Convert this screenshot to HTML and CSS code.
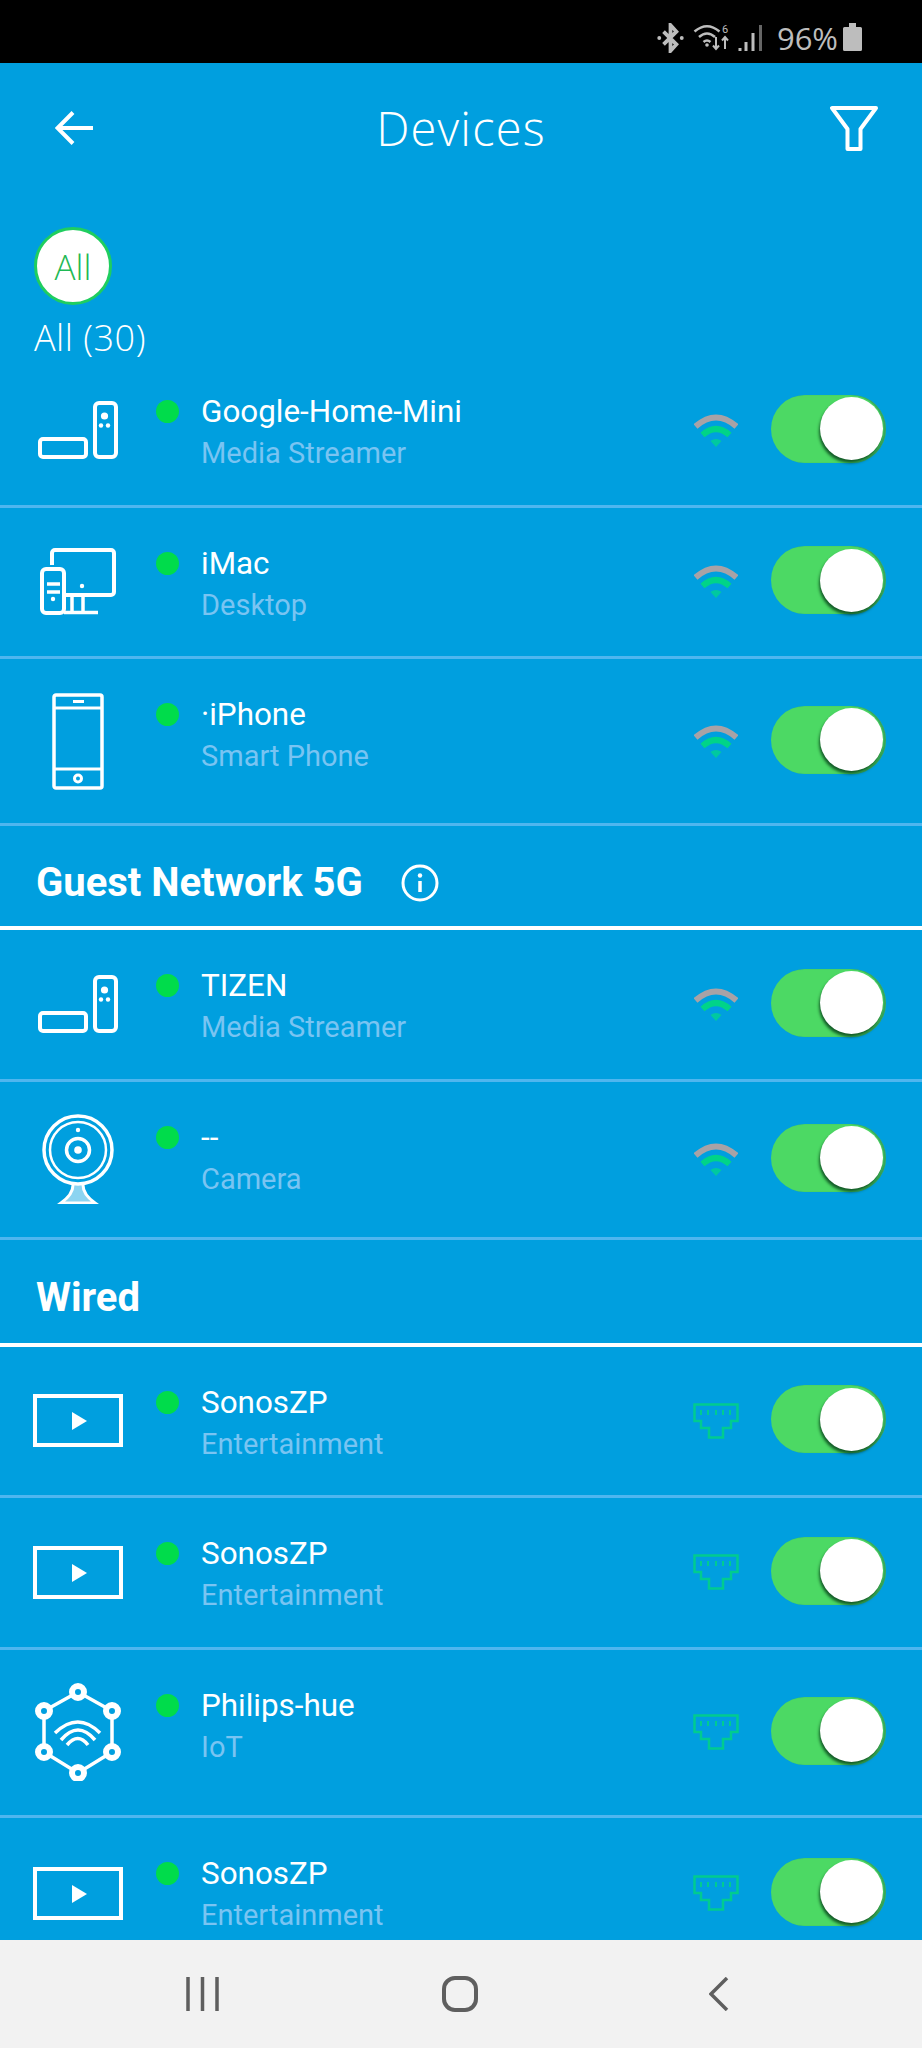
FILE: index.html
```html
<!DOCTYPE html>
<html lang="en">
<head>
    <meta charset="UTF-8">
    <meta name="viewport" content="width=device-width, initial-scale=1.0">
    <title>Devices</title>
    <link rel="stylesheet" href="styles.css">
</head>
<body>

<svg class="sprites" width="0" height="0">
    <symbol id="media" viewBox="0 0 80 58">
        <rect x="2" y="38" width="46" height="18" rx="3" fill="none" stroke="#fff" stroke-width="4"/>
        <rect x="57" y="2" width="21" height="54" rx="4" fill="none" stroke="#fff" stroke-width="4"/>
        <circle cx="66.5" cy="15" r="3.6" fill="#fff"/>
        <circle cx="63" cy="24.5" r="2.2" fill="#fff"/>
        <circle cx="70" cy="24.5" r="2.2" fill="#fff"/>
    </symbol>
    <symbol id="wifi" viewBox="0 0 44 33">
        <path d="M1.500 12.500Q22 -5.500 42.500 12.500" fill="none" stroke="#a8a2a6" stroke-width="6"/>
        <path d="M8.500 21Q22 9 35.500 21" fill="none" stroke="#00d488" stroke-width="6"/>
        <path d="M16.500 27Q22 23 27.500 27L22 33Z" fill="#00c9a0"/>
    </symbol>
    <symbol id="screen" viewBox="0 0 90 53">
        <rect x="2" y="2" width="86" height="49" fill="none" stroke="#fff" stroke-width="4"/>
        <path d="M39 18L54 27L39 36Z" fill="#fff"/>
    </symbol>
    <symbol id="ethernet" viewBox="0 0 46 36">
        <path d="M1.500 1.500H44.500V18H38V25H30V34.500H16V25H8V18H1.500Z" fill="none" stroke="#00cc90" stroke-width="2.500"/>
        <path d="M8 7V12M15 7V12M23 7V12M30 7V12M37 7V12" stroke="#00cc90" stroke-width="2"/>
    </symbol>
</svg>

<div class="phone">
    <div class="status-bar">
        <svg class="st-bt" viewBox="0 0 25 28"><path d="M6 8L18 20L12.500 26V2L18 8L6 20" fill="none" stroke="#bdbdbd" stroke-width="3.500"/><circle cx="2" cy="14" r="1.800" fill="#bdbdbd"/><circle cx="23" cy="14" r="1.800" fill="#bdbdbd"/></svg>
        <svg class="st-wifi" viewBox="0 0 37 27">
            <path d="M1.500 7.500Q14 -3 26.500 7.500M6 13Q14 6 22 13M10.500 18Q14 15 17.500 18" fill="none" stroke="#bdbdbd" stroke-width="2.500"/>
            <circle cx="14" cy="21" r="1.800" fill="#bdbdbd"/>
            <text x="29" y="9" class="st-six">6</text>
            <path d="M23 13V25M20 21.500L23 25L26 21.500M32 25V13M29 16.500L32 13L35 16.500" fill="none" stroke="#bdbdbd" stroke-width="2"/>
        </svg>
        <svg class="st-signal" viewBox="0 0 24 26"><path d="M2 23V26M8 17V26M15 8V26" stroke="#bdbdbd" stroke-width="3"/><path d="M22.500 0V26" stroke="#666" stroke-width="3"/></svg>
        <span class="st-pct">96%</span>
        <svg class="st-batt" viewBox="0 0 19 28"><path d="M6 0H13V4H17.500A1.500 1.500 0 0 1 19 5.500V26.500A1.500 1.500 0 0 1 17.500 28H1.500A1.500 1.500 0 0 1 0 26.500V5.500A1.500 1.500 0 0 1 1.500 4H6Z" fill="#bdbdbd"/></svg>
    </div>

    <div class="app-bar">
        <svg class="back" viewBox="0 0 39 34"><path d="M38 17H3M18 1.500L2.500 17L18 32.500" fill="none" stroke="#fff" stroke-width="4"/></svg>
        <h1>Devices</h1>
        <svg class="filter" viewBox="0 0 48 45"><path d="M2 2H46L30.500 23V43H17.500V23Z" fill="none" stroke="#fff" stroke-width="4" stroke-linejoin="round"/></svg>
    </div>

    <div class="filter-strip">
        <div class="chip">All</div>
        <div class="chip-label">All (30)</div>
    </div>

    <div class="list">
        <div class="row">
            <div class="icon-cell"><svg class="ic-media"><use href="#media"/></svg></div>
            <div class="dot"></div>
            <div class="info"><div class="name">Google-Home-Mini</div><div class="type">Media Streamer</div></div>
            <svg class="link-ic"><use href="#wifi"/></svg>
            <div class="toggle"><div class="knob"></div></div>
        </div>
        <div class="row">
            <div class="icon-cell">
                <svg class="ic-imac" viewBox="0 0 76 67">
                    <path d="M12 17V5a3 3 0 0 1 3-3h56a3 3 0 0 1 3 3v39a3 3 0 0 1-3 3H24" fill="none" stroke="#fff" stroke-width="4"/>
                    <rect x="2" y="21" width="22" height="44" rx="4" fill="none" stroke="#fff" stroke-width="4"/>
                    <path d="M7 36H20M7 44H20M32 47V64M43 47V64M24 64.500H58" fill="none" stroke="#fff" stroke-width="3.500"/>
                    <circle cx="13" cy="51" r="2.200" fill="#fff"/>
                    <circle cx="42" cy="38" r="2.200" fill="#fff"/>
                </svg>
            </div>
            <div class="dot"></div>
            <div class="info"><div class="name">iMac</div><div class="type">Desktop</div></div>
            <svg class="link-ic"><use href="#wifi"/></svg>
            <div class="toggle"><div class="knob"></div></div>
        </div>
        <div class="row row-tall">
            <div class="icon-cell">
                <svg class="ic-phone" viewBox="0 0 52 97">
                    <rect x="2" y="2" width="48" height="93" rx="2" fill="none" stroke="#fff" stroke-width="3.500"/>
                    <path d="M2 15H50M2 76H50" stroke="#fff" stroke-width="3"/>
                    <path d="M21 8.500H32" stroke="#fff" stroke-width="3"/>
                    <circle cx="26" cy="85.500" r="3.500" fill="none" stroke="#fff" stroke-width="3"/>
                </svg>
            </div>
            <div class="dot"></div>
            <div class="info"><div class="name">·iPhone</div><div class="type">Smart Phone</div></div>
            <svg class="link-ic"><use href="#wifi"/></svg>
            <div class="toggle"><div class="knob"></div></div>
        </div>

        <div class="section">
            <h2>Guest Network 5G</h2>
            <svg class="info-ic" viewBox="0 0 38 38">
                <circle cx="19" cy="19" r="17" fill="none" stroke="#fff" stroke-width="3"/>
                <path d="M19 17V28" stroke="#fff" stroke-width="3.500"/>
                <circle cx="19" cy="11.500" r="2.200" fill="#fff"/>
            </svg>
        </div>

        <div class="row">
            <div class="icon-cell"><svg class="ic-media"><use href="#media"/></svg></div>
            <div class="dot"></div>
            <div class="info"><div class="name">TIZEN</div><div class="type">Media Streamer</div></div>
            <svg class="link-ic"><use href="#wifi"/></svg>
            <div class="toggle"><div class="knob"></div></div>
        </div>
        <div class="row row-cam">
            <div class="icon-cell">
                <svg class="ic-cam" viewBox="0 0 72 90">
                    <circle cx="36" cy="36" r="34" fill="none" stroke="#fff" stroke-width="3.500"/>
                    <circle cx="36" cy="36" r="28" fill="none" stroke="#fff" stroke-width="2.500"/>
                    <circle cx="36" cy="36" r="11.500" fill="none" stroke="#fff" stroke-width="3.500"/>
                    <circle cx="36" cy="36" r="3.800" fill="#fff"/>
                    <circle cx="36" cy="16" r="2.200" fill="#fff"/>
                    <path d="M31 71C31 79 26 84 19 89H53C46 84 41 79 41 71" fill="#fff" fill-opacity=".55" stroke="#fff" stroke-width="3"/>
                </svg>
            </div>
            <div class="dot"></div>
            <div class="info"><div class="name">--</div><div class="type">Camera</div></div>
            <svg class="link-ic"><use href="#wifi"/></svg>
            <div class="toggle"><div class="knob"></div></div>
        </div>

        <div class="section section-wired">
            <h2>Wired</h2>
        </div>

        <div class="row">
            <div class="icon-cell"><svg class="ic-screen"><use href="#screen"/></svg></div>
            <div class="dot"></div>
            <div class="info"><div class="name">SonosZP</div><div class="type">Entertainment</div></div>
            <svg class="link-ic link-eth"><use href="#ethernet"/></svg>
            <div class="toggle"><div class="knob"></div></div>
        </div>
        <div class="row">
            <div class="icon-cell"><svg class="ic-screen"><use href="#screen"/></svg></div>
            <div class="dot"></div>
            <div class="info"><div class="name">SonosZP</div><div class="type">Entertainment</div></div>
            <svg class="link-ic link-eth"><use href="#ethernet"/></svg>
            <div class="toggle"><div class="knob"></div></div>
        </div>
        <div class="row row-tall row-hue">
            <div class="icon-cell">
                <svg class="ic-hub" viewBox="0 0 86 98">
                    <path d="M43 9L77 28V69L43 90L9 69V28Z" fill="none" stroke="#fff" stroke-width="3.500"/>
                    <g class="hub-node" stroke="#fff" stroke-width="6">
                        <circle cx="43" cy="9" r="6"/>
                        <circle cx="77" cy="28" r="6"/>
                        <circle cx="77" cy="69" r="6"/>
                        <circle cx="43" cy="90" r="6"/>
                        <circle cx="9" cy="69" r="6"/>
                        <circle cx="9" cy="28" r="6"/>
                    </g>
                    <path d="M20 50Q43 28 65 50M26 57Q43 37 60 57M32 62Q43 49 53 62" fill="none" stroke="#fff" stroke-width="3.500"/>
                </svg>
            </div>
            <div class="dot"></div>
            <div class="info"><div class="name">Philips-hue</div><div class="type">IoT</div></div>
            <svg class="link-ic link-eth"><use href="#ethernet"/></svg>
            <div class="toggle"><div class="knob"></div></div>
        </div>
        <div class="row row-last">
            <div class="icon-cell"><svg class="ic-screen"><use href="#screen"/></svg></div>
            <div class="dot"></div>
            <div class="info"><div class="name">SonosZP</div><div class="type">Entertainment</div></div>
            <svg class="link-ic link-eth"><use href="#ethernet"/></svg>
            <div class="toggle"><div class="knob"></div></div>
        </div>
    </div>

    <div class="nav-bar">
        <svg class="nav-recent" viewBox="0 0 33 34"><path d="M2 0V34M16.500 0V34M31 0V34" stroke="#5f5f5f" stroke-width="3.500"/></svg>
        <svg class="nav-home" viewBox="0 0 36 36"><rect x="2" y="2" width="32" height="32" rx="11" fill="none" stroke="#5f5f5f" stroke-width="4"/></svg>
        <svg class="nav-back" viewBox="0 0 20 34"><path d="M18 1L2 17L18 33" fill="none" stroke="#5f5f5f" stroke-width="3.500"/></svg>
    </div>
</div>

</body>
</html>
```

FILE: styles.css
```css
* { box-sizing: border-box; }
body { margin: 0; background: #009fdf; font-family: Roboto, sans-serif; color: #fff; }
.sprites { display: block; height: 0; }
.phone { width: 922px; height: 2048px; display: flex; flex-direction: column; background: #009fdf; overflow: hidden; }

.status-bar { height: 63px; flex: none; background: #000; display: flex; align-items: center; padding-right: 60px; justify-content: flex-end; color: #bdbdbd; }
.status-bar svg { display: block; flex: none; }
.st-bt { width: 27px; height: 30px; margin-right: 9px; margin-top: 12px; }
.st-wifi { width: 37px; height: 27px; margin-right: 8px; margin-top: 12px; }
.st-six { font-family: Roboto, sans-serif; font-size: 11px; fill: #bdbdbd; }
.st-signal { width: 24px; height: 26px; margin-right: 15px; margin-top: 12px; }
.st-pct { font-family: "Open Sans", sans-serif; font-size: 31px; line-height: 36px; margin-right: 5px; margin-top: 13px; }
.st-batt { width: 19px; height: 28px; margin-top: 11px; }

.app-bar { height: 130px; flex: none; display: flex; align-items: center; justify-content: space-between; padding: 0 44px 0 55px; }
.app-bar h1 { margin: 0 0 0 -2px; font-family: "Open Sans", sans-serif; font-weight: 350; font-size: 47px; letter-spacing: 1.2px; line-height: 60px; }
.back { width: 39px; height: 34px; }
.filter { width: 48px; height: 45px; }

.filter-strip { height: 163px; flex: none; padding: 34px 0 0 34px; }
.chip { width: 78px; height: 78px; border-radius: 50%; background: #fff; border: 3px solid #1fce5f; color: #1fb955; font-family: "Open Sans", sans-serif; font-weight: 350; font-size: 35px; display: flex; align-items: center; justify-content: center; }
.chip-label { margin-top: 11px; font-family: "Open Sans", sans-serif; font-weight: 350; font-size: 36px; letter-spacing: .5px; line-height: 44px; }

.list { flex: 1; overflow: hidden; }
.row { height: 151.5px; display: flex; align-items: center; padding-right: 36px; border-bottom: 3px solid #4fb6ef; }
.row-tall { height: 167px; }
.row-hue { height: 168px; }
.row-cam { height: 158px; }
.row-last { border-bottom: none; }

.icon-cell { width: 156px; flex: none; display: flex; justify-content: center; }
.icon-cell svg { display: block; }
.ic-media { width: 80px; height: 58px; }
.ic-imac { width: 76px; height: 67px; }
.ic-phone { width: 52px; height: 97px; }
.ic-cam { width: 72px; height: 90px; }
.ic-hub { width: 86px; height: 98px; }
.hub-node { fill: #009fdf; }
.ic-screen { width: 90px; height: 53px; }

.dot { width: 23px; height: 23px; flex: none; align-self: flex-start; margin-top: 44px; border-radius: 50%; background: #00dc4b; }
.info { flex: 1; align-self: flex-start; padding: 36px 0 0 22px; }
.name { font-size: 31.4px; line-height: 40px; color: #fff; }
.type { margin-top: 1px; font-size: 29px; line-height: 40px; color: #79c4f2; }

.link-ic { width: 44px; height: 33px; flex: none; margin-right: 33px; }
.link-eth { width: 46px; height: 36px; margin-right: 32px; }

.toggle { width: 115px; height: 68px; flex: none; margin-bottom: 3px; display: flex; align-items: center; justify-content: flex-end; padding-right: 3px; border-radius: 34px; background: #4cd964; box-shadow: inset -2px 0 1px rgba(40, 130, 90, .6); }
.knob { width: 63px; height: 63px; border-radius: 50%; background: #fff; box-shadow: -1px 3px 3px rgba(0, 50, 20, .75); }

.section { height: 104px; display: flex; align-items: center; gap: 38px; padding: 13px 0 0 36px; border-bottom: 4px solid #fff; }
.section-wired { height: 107px; }
.section h2 { margin: 0; font-size: 40px; font-weight: 700; }
.info-ic { width: 38px; height: 38px; }

.nav-bar { height: 108px; flex: none; display: flex; align-items: center; padding-left: 186px; background: #f2f2f2; }
.nav-recent { width: 33px; height: 34px; margin-right: 223px; }
.nav-home { width: 36px; height: 36px; margin-right: 231px; }
.nav-back { width: 20px; height: 34px; }
```
